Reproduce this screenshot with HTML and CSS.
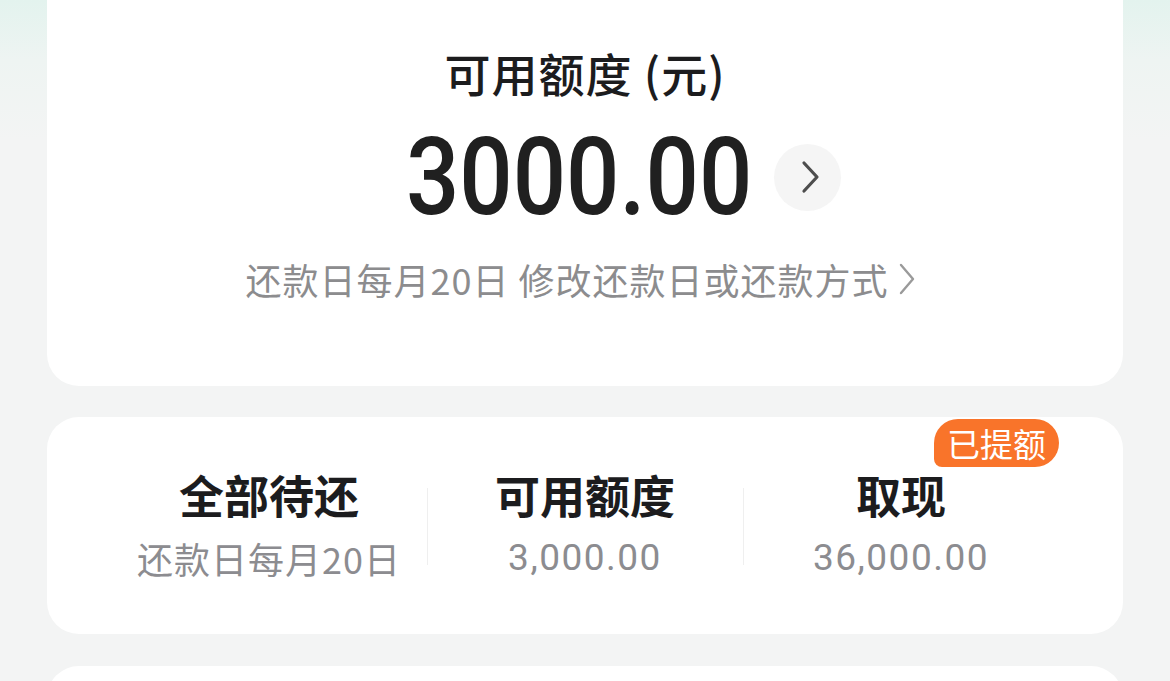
FILE: index.html
```html
<!DOCTYPE html>
<html>
<head>
	<meta charset="utf-8">
	<meta name="viewport" content="width=device-width, initial-scale=1">
	<title>可用额度</title>
	<link rel="stylesheet" href="styles.css">
</head>
<body>
	<main class="page">
		<section class="card quota">
			<h2 class="quota-title">可用额度 (元)</h2>
			<div class="amount-row">
				<span class="amount">3000.00</span>
				<button class="round-arrow">
					<svg width="26" height="38" viewBox="0 0 26 38"><path d="M7 5 L20 19 L7 33" fill="none" stroke="#4d4d4d" stroke-width="3.2" stroke-linecap="round" stroke-linejoin="round"/></svg>
				</button>
			</div>
			<p class="due-line">还款日每月20日 修改还款日或还款方式
				<svg width="20" height="34" viewBox="0 0 20 34"><path d="M4 3 L16 17 L4 31" fill="none" stroke="#9a9a9a" stroke-width="2.4" stroke-linecap="round" stroke-linejoin="round"/></svg>
			</p>
		</section>
		<section class="card summary">
			<div class="col">
				<h3>全部待还</h3>
				<p>还款日每月20日</p>
			</div>
			<div class="col split">
				<h3>可用额度</h3>
				<p class="num">3,000.00</p>
			</div>
			<div class="col split">
				<span class="badge">已提额</span>
				<h3>取现</h3>
				<p class="num">36,000.00</p>
			</div>
		</section>
		<section class="card next"></section>
	</main>
</body>
</html>
```

FILE: styles.css
```css
body{margin: 0;font-family: "Noto Sans CJK SC", "Noto Sans", sans-serif;background: linear-gradient(180deg, #e3f3ee 0, #eef4f2 60px, #f3f4f4 140px) #f3f4f4;color: #1c1c1e;}
.page{padding: 0 47px;width: 1076px;height: 681px;overflow: hidden;}
.card{background: #fff;border-radius: 32px;}
.quota{border-radius: 0 0 32px 32px;padding: 47px 0 85px;text-align: center;}
.quota-title{margin: 0;font-size: 46px;line-height: 50px;font-weight: 500;letter-spacing: 1px;}
.amount-row{display: flex;justify-content: center;align-items: center;gap: 21px;margin-top: 25px;height: 110px;padding-left: 76px;}
.amount{display: inline-block;font-family: Roboto, sans-serif;font-size: 108px;font-weight: 500;line-height: 110px;color: #202020;transform: scaleX(0.87);margin: 0 -25px;}
.round-arrow{width: 67px;height: 67px;border-radius: 50%;border: none;background: #f5f5f5;padding: 0;display: flex;align-items: center;justify-content: center;padding-left: 4px;}
.due-line{margin: 25px 0 0;font-size: 36px;line-height: 44px;letter-spacing: 1px;color: #8c8c8e;display: flex;justify-content: center;align-items: center;gap: 8px;padding-right: 8px;}
.summary{margin-top: 31px;display: flex;justify-content: center;padding: 52px 0 54px;}
.col{width: 316px;text-align: center;position: relative;}
.col h3{margin: 0;font-size: 45px;line-height: 52px;font-weight: 700;}
.col p{margin: 15px 0 0;font-size: 36px;line-height: 44px;letter-spacing: 1px;color: #8c8c90;}
.col .num{font-family: Roboto, sans-serif;font-size: 37px;letter-spacing: 1.5px;}
.split::before{content: "";position: absolute;left: 0;top: 19px;height: 77px;border-left: 1px solid #efefef;}
.badge{position: absolute;right: 0;top: -50px;background: #f9742a;color: #fff;font-size: 33px;line-height: 48px;height: 48px;padding: 0 13px;border-radius: 24px 24px 24px 8px;}
.next{margin-top: 32px;height: 120px;}
```
